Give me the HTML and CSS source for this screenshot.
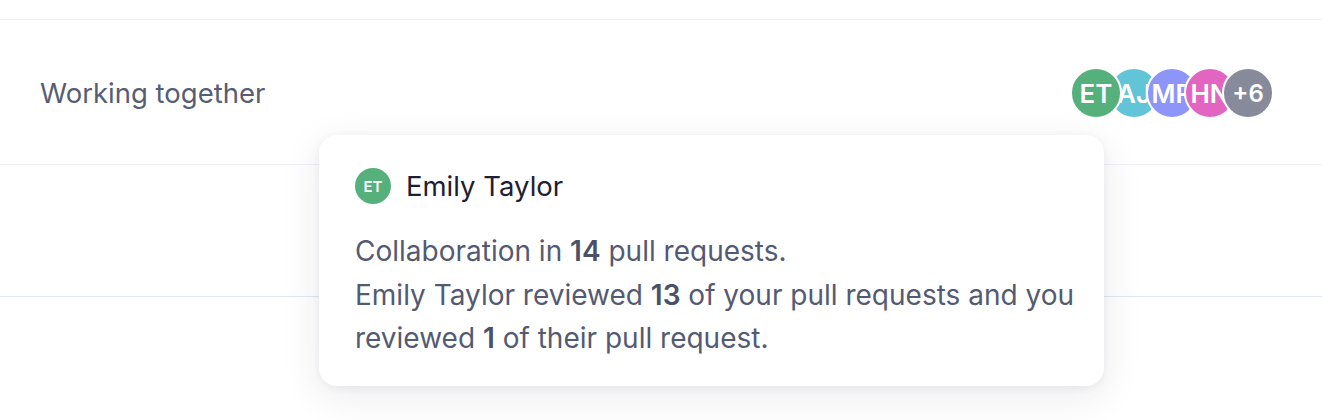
FILE: index.html
```html
<!DOCTYPE html>
<html>
<head>
<meta charset="utf-8">
<link rel="stylesheet" href="styles.css">
</head>
<body>
<div class="list">
  <div class="row row-prev"></div>
  <div class="row row-main">
    <div class="label">Working together</div>
    <div class="avatars">
      <span class="av av-et">ET</span>
      <span class="av av-aj">AJ</span>
      <span class="av av-mr">MR</span>
      <span class="av av-hn">HN</span>
      <span class="av av-more">+6</span>
    </div>
  </div>
  <div class="row row-next"></div>
</div>
<div class="tooltip">
  <div class="tip-head">
    <span class="mini">ET</span>
    <span class="tip-name">Emily Taylor</span>
  </div>
  <div class="tip-body">
    <p>Collaboration in <b>14</b> pull requests.</p>
    <p>Emily Taylor reviewed <b>13</b> of your pull requests and you reviewed <b>1</b> of their pull request.</p>
  </div>
</div>
</body>
</html>
```
FILE: styles.css
```css
* { box-sizing: border-box; }
html, body { margin: 0; padding: 0; background: #ffffff; }
body {
  font-family: Inter, "Noto Sans", sans-serif;
  position: relative;
  width: 1322px;
  height: 420px;
  overflow: hidden;
}
.list { display: flex; flex-direction: column; }
.row { border-bottom: 1px solid #eef0f6; }
.row-prev { height: 20px; }
.row-main {
  height: 145px;
  display: flex;
  align-items: center;
  justify-content: space-between;
  padding: 0 48px 0 40px;
}
.row-next { height: 132px; border-bottom-color: #e3e6f4; }
.label {
  font-size: 27.5px;
  color: #565d74;
  margin-top: 1px;
}
.avatars { display: flex; align-items: center; margin-top: 2px; }
.av {
  width: 52px;
  height: 52px;
  border-radius: 50%;
  border: 2px solid #fff;
  display: flex;
  align-items: center;
  justify-content: center;
  color: #fff;
  font-size: 26px;
  font-weight: 600;
  margin-left: -14px;
  position: relative;
  white-space: nowrap;
}
.av:first-child { margin-left: 0; }
.av-et { background: #55b07c; z-index: 6; }
.av-aj { background: #62c4d7; z-index: 1; }
.av-mr { background: #8e95f8; z-index: 2; }
.av-hn { background: #e165c1; z-index: 3; }
.av-more { background: #878a9b; z-index: 4; font-size: 24px; }

.tooltip {
  position: absolute;
  left: 319px;
  top: 135px;
  width: 785px;
  height: 251px;
  background: #fff;
  border-radius: 18px;
  box-shadow: 0 10px 40px rgba(30, 35, 60, 0.09), 0 2px 8px rgba(30, 35, 60, 0.06);
  padding: 33px 24px 0 36px;
}
.tip-head { display: flex; align-items: center; gap: 15px; }
.mini {
  width: 36px;
  height: 36px;
  border-radius: 50%;
  background: #55b07c;
  color: #fff;
  font-size: 15px;
  font-weight: 600;
  display: flex;
  align-items: center;
  justify-content: center;
}
.tip-name { font-size: 27.5px; color: #1e2032; }
.tip-body {
  margin-top: 26px;
  font-size: 28px;
  line-height: 43.5px;
  color: #545a72;
}
.tip-body p { margin: 0; }
.tip-body b { font-weight: 600; color: #4a5068; }
```
